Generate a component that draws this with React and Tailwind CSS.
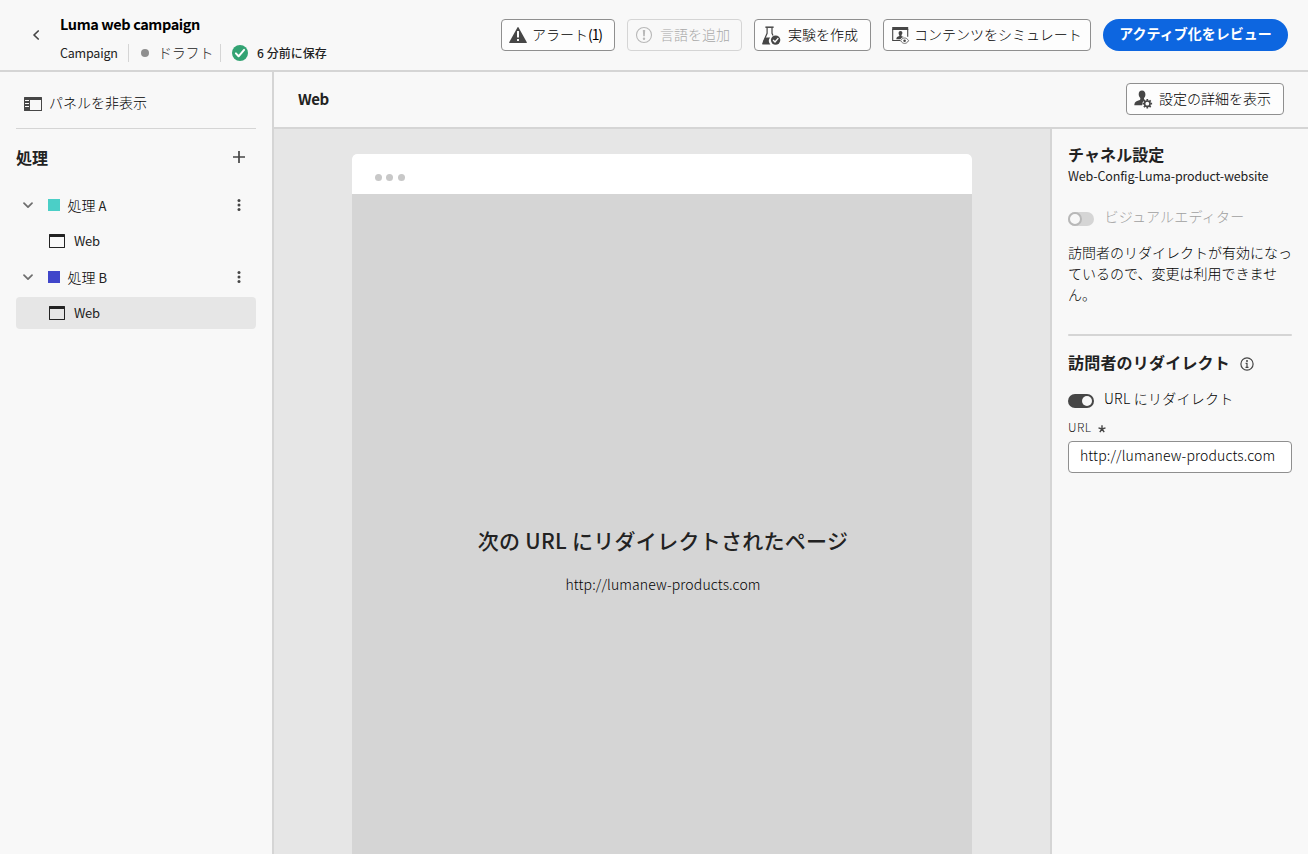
import React from "react";

function ActionButton({ icon, children, className = "" }) {
  return (
    <button
      className={`flex h-8 shrink-0 items-center rounded border bg-[#fdfdfd] text-sm leading-[21px] font-light whitespace-nowrap ${className}`}
    >
      {icon}
      <span className="pb-0.5">{children}</span>
    </button>
  );
}

const AlertIcon = () => (
  <svg className="h-[18px] w-[18px] shrink-0" viewBox="0 0 18 18">
    <path
      fill="#464646"
      fillRule="evenodd"
      d="M8.56 1.29.2 16.2A.54.54 0 0 0 .7 17h16.6a.54.54 0 0 0 .5-.8L9.44 1.29a.5.5 0 0 0-.88 0ZM10 14.6a.3.3 0 0 1-.3.3H8.3a.3.3 0 0 1-.3-.3v-1.4a.3.3 0 0 1 .3-.3h1.4a.3.3 0 0 1 .3.3Zm0-3.3a.3.3 0 0 1-.3.3H8.3a.3.3 0 0 1-.3-.3v-6a.3.3 0 0 1 .3-.3h1.4a.3.3 0 0 1 .3.3Z"
    />
  </svg>
);

const NoticeIcon = () => (
  <svg className="h-[18px] w-[18px] shrink-0" viewBox="0 0 18 18" fill="none">
    <circle cx="9" cy="9" r="7.5" stroke="#b8b8b8" strokeWidth="1.1" />
    <path d="M7.8 4h2.4l-.4 6.3H8.2Z" fill="#b8b8b8" />
    <circle cx="9" cy="12.7" r="1.2" fill="#b8b8b8" />
  </svg>
);

const FlaskIcon = () => (
  <svg className="h-[19px] w-[19px] shrink-0" viewBox="0 0 19 19" fill="none">
    <path d="M3.4 1.2h8.2" stroke="#464646" strokeWidth="1.5" />
    <path d="M5.1 2v5.3L1.3 16M10 2v5.3l1 2.2" stroke="#464646" strokeWidth="1.2" />
    <path d="M3.2 11.6h4.9a5.4 5.4 0 0 0 .3 7H1.2c-.9 0-1.2-.8-.9-1.5Z" fill="#464646" />
    <circle cx="13.6" cy="14.1" r="4.7" fill="#464646" />
    <path d="m11.1 14.1 1.9 1.9 3.3-3.9" stroke="#fdfdfd" strokeWidth="1.4" />
  </svg>
);

const SimulateIcon = () => (
  <svg className="h-[18px] w-[18px] shrink-0" viewBox="0 0 18 18" fill="none">
    <path d="M.2 1h16v3H.2Z" fill="#464646" />
    <path d="M.7 3v11.500h7.600M15.700 3v7.800" stroke="#464646" strokeWidth="1.100" />
    <path
      d="M8.500 5c1.300 0 1.900.9 1.900 2.100 0 .8-.4 1.500-.9 2v.8c0 .3 1.300.5 2.400 1.100-1.500.4-2.700 1.100-3.500 2.300H4.300c0-2 1.200-2.700 3-3.300v-.8c-.5-.5-.7-1.200-.7-2C6.600 5.900 7.200 5 8.500 5Z"
      fill="#464646"
    />
    <path
      d="M8.600 14.700c1.200-1.900 2.500-2.700 4-2.700s2.800.8 4 2.700c-1.200 1.900-2.500 2.700-4 2.700s-2.800-.8-4-2.700Z"
      fill="#fdfdfd"
      stroke="#6a6a6a"
      strokeWidth="1"
    />
    <circle cx="12.600" cy="14.700" r="1.300" fill="#464646" />
  </svg>
);

const UserGearIcon = () => (
  <svg className="h-[19px] w-[19px] shrink-0" viewBox="0 0 19 19" fill="none">
    <path
      d="M8 .4c2.300 0 3.500 1.700 3.400 4 0 1.700-.7 2.900-1.400 3.700v1c0 .5.300.8 1 .9-1.900 1-3 2.800-2.900 5.300H.7c-.3 0-.5-.2-.4-.6.3-2.900 2.500-3.600 5.500-4.600.4-.2.500-.5.500-1V8c-.8-.8-1.600-2-1.600-3.700C4.700 2 5.800.400 8 .400Z"
      fill="#464646"
    />
    <circle cx="13.300" cy="13.700" r="2.700" stroke="#464646" strokeWidth="1.600" />
    <path
      d="M13.300 8.900v1.800M13.300 16.700v1.800M8.500 13.700h1.800M16.300 13.700h1.800M9.900 10.300l1.300 1.300M15.400 15.800l1.300 1.300M16.700 10.300l-1.300 1.300M11.200 15.800l-1.300 1.300"
      stroke="#464646"
      strokeWidth="1.700"
    />
  </svg>
);

const PanelIcon = () => (
  <svg className="h-[14px] w-[18px] shrink-0" viewBox="0 0 18 14">
    <path fill="#464646" fillRule="evenodd" d="M.5 0h17a.5.5 0 0 1 .5.500v13a.5.5 0 0 1-.5.500H.5a.5.5 0 0 1-.5-.5V.5A.5.5 0 0 1 .5 0ZM6 3v10h11V3Z" />
    <path d="M1 3.500h4M1 6.500h4M1 9.500h4" stroke="#f8f8f8" strokeWidth="1" />
  </svg>
);

const WindowIcon = () => (
  <svg className="h-[14px] w-4 shrink-0" viewBox="0 0 16 14">
    <path fill="#222222" fillRule="evenodd" d="M.4 0h15.200a.4.4 0 0 1 .4.400v13.200a.4.400 0 0 1-.4.400H.4a.4.400 0 0 1-.4-.4V.4A.4.400 0 0 1 .4 0ZM1 3v10h14V3Z" />
  </svg>
);

const MoreIcon = () => (
  <svg className="h-3 w-1 shrink-0" viewBox="0 0 4 12" fill="#464646">
    <circle cx="2" cy="1.500" r="1.500" />
    <circle cx="2" cy="6" r="1.500" />
    <circle cx="2" cy="10.500" r="1.500" />
  </svg>
);

function Treatment({ label, swatch, selected }) {
  return (
    <div>
      <div className="flex h-10 items-center pr-[15px] pl-[7px]">
        <svg className="h-[7px] w-[10px] shrink-0" viewBox="0 0 10 7" fill="none">
          <path d="m1 1.200 4 4 4-4" stroke="#6e6e6e" strokeWidth="1.700" strokeLinecap="round" strokeLinejoin="round" />
        </svg>
        <span className={`ml-[15px] h-3 w-3 ${swatch}`} />
        <span className="ml-[7.5px] flex-1 font-light text-black">
          処理 <span className="text-[13px] font-normal text-[#222222]">{label}</span>
        </span>
        <MoreIcon />
      </div>
      <div className={`flex h-8 items-center rounded pl-[33px] ${selected ? "bg-[#e6e6e6]" : ""}`}>
        <WindowIcon />
        <span className="ml-[9px] pb-px text-[13px] tracking-[-0.3px]">Web</span>
      </div>
    </div>
  );
}

export default function App() {
  return (
    <div className="flex h-[854px] w-[1308px] flex-col overflow-hidden bg-[#f8f8f8] font-['Noto_Sans_CJK_JP',sans-serif] text-sm leading-[21px] text-[#222222]">
      <header className="flex h-[72px] shrink-0 border-b-2 border-[#d5d5d5] pr-5 pl-8">
        <svg className="mt-[30px] h-[10px] w-2 shrink-0" viewBox="0 0 8 10" fill="none">
          <path d="M6.200 1 2 5l4.200 4" stroke="#464646" strokeWidth="1.700" strokeLinecap="round" strokeLinejoin="round" />
        </svg>
        <div className="ml-5 flex-1 pt-3">
          <h1 className="h-6 text-[14.5px] leading-6 font-bold tracking-[-0.4px] text-black">Luma web campaign</h1>
          <div className="mt-2 flex h-[18px] items-center text-[13px] whitespace-nowrap">
            <span className="w-[58px] pb-0.5 text-[12.5px] tracking-[-0.2px]">Campaign</span>
            <span className="ml-[10px] h-[18px] w-px bg-[#d5d5d5]" />
            <span className="ml-3 h-2 w-2 rounded-full bg-[#8f8f8f]" />
            <span className="ml-[9px] w-[55px] pb-0.5 text-sm font-light tracking-[-0.2px] text-[#222222]">ドラフト</span>
            <span className="ml-[7px] h-[18px] w-px bg-[#d5d5d5]" />
            <svg className="ml-[11px] h-4 w-4" viewBox="0 0 16 16" fill="none">
              <circle cx="8" cy="8" r="8" fill="#33a373" />
              <path d="m3.900 8.400 2.700 2.900 5.500-6.400" stroke="#fff" strokeWidth="2" strokeLinecap="round" strokeLinejoin="round" />
            </svg>
            <span className="ml-[9px] pb-0.5 text-[12px] font-medium tracking-[0.05px]">6 分前に保存</span>
          </div>
        </div>
        <div className="flex items-start gap-3 pt-[19px]">
          <ActionButton icon={<AlertIcon />} className="w-[114px] gap-[5px] border-[#8f8f8f] pl-[7px] text-black">
            アラート<span className="font-normal tracking-[-1.1px]">(1)</span>
          </ActionButton>
          <button className="flex h-8 w-[115px] shrink-0 items-center gap-[7px] rounded border border-[#d5d5d5] pl-[7px] font-light whitespace-nowrap text-[#a8a8a8]">
            <NoticeIcon />
            <span className="pb-0.5">言語を追加</span>
          </button>
          <ActionButton icon={<FlaskIcon />} className="w-[117px] gap-[7px] border-[#8f8f8f] pl-[7px] text-black">
            実験を作成
          </ActionButton>
          <ActionButton icon={<SimulateIcon />} className="w-[208px] gap-1 border-[#8f8f8f] pl-2 text-black">
            コンテンツをシミュレート
          </ActionButton>
          <button className="h-8 w-[185px] rounded-full bg-[#0d66e0] pb-1 text-sm font-bold whitespace-nowrap text-white">
            アクティブ化をレビュー
          </button>
        </div>
      </header>

      <div className="flex min-h-0 flex-1">
        <aside className="w-[274px] shrink-0 border-r-2 border-[#d5d5d5] px-4">
          <div className="flex h-[57px] items-center gap-[7px] border-b border-[#d5d5d5] pt-2 pl-2">
            <PanelIcon />
            <span className="pb-[3px] font-light text-black">パネルを非表示</span>
          </div>
          <div className="flex h-14 items-center justify-between pr-[11px]">
            <h2 className="text-base font-bold">処理</h2>
            <svg className="h-3 w-3" viewBox="0 0 12 12">
              <path d="M6 0v12M0 6h12" stroke="#464646" strokeWidth="1.700" />
            </svg>
          </div>
          <Treatment label="A" swatch="bg-[#4bcfc7]" />
          <Treatment label="B" swatch="bg-[#4046ca]" selected />
        </aside>

        <div className="flex min-w-0 flex-1 flex-col">
          <div className="flex h-[57px] shrink-0 items-center justify-between border-b-2 border-[#d5d5d5] pr-6 pl-6">
            <h2 className="pb-0.5 text-[15px] font-bold tracking-[-0.5px]">Web</h2>
            <ActionButton icon={<UserGearIcon />} className="mb-px w-[158px] gap-[6px] border-[#8f8f8f] pl-[7px] text-black">
              設定の詳細を表示
            </ActionButton>
          </div>
          <div className="flex min-h-0 flex-1">
            <main className="flex flex-1 justify-center bg-[#e6e6e6] pt-[25px]">
              <div className="flex w-[620px] flex-col overflow-hidden rounded-t-[5px] bg-[#d5d5d5]">
                <div className="flex h-10 shrink-0 items-center gap-[4.700px] bg-white pt-[6px] pl-[22.500px]">
                  <span className="h-[7px] w-[7px] rounded-full bg-[#c8c8c8]" />
                  <span className="h-[7px] w-[7px] rounded-full bg-[#c8c8c8]" />
                  <span className="h-[7px] w-[7px] rounded-full bg-[#c8c8c8]" />
                </div>
                <div className="flex flex-col items-center pt-[330px] pl-[2px] whitespace-nowrap">
                  <h3 className="text-[21px] leading-8 font-medium tracking-[0.28px]">次の URL にリダイレクトされたページ</h3>
                  <p className="mt-[18px] font-light tracking-[0.13px] text-black">http://lumanew-products.com</p>
                </div>
              </div>
            </main>

            <aside className="w-[258px] shrink-0 border-l-2 border-[#d5d5d5] px-4 pt-[15px]">
              <h2 className="text-base leading-[21px] font-bold tracking-[0.1px]">チャネル設定</h2>
              <p className="text-[12.5px] leading-[21px] tracking-[-0.15px] whitespace-nowrap">Web-Config-Luma-product-website</p>
              <div className="mt-[22px] flex h-[21px] items-center">
                <span className="flex h-[14px] w-[26px] rounded-full bg-[#d5d5d5]">
                  <span className="h-[14px] w-[14px] rounded-full border-2 border-[#b8b8b8] bg-[#f8f8f8]" />
                </span>
                <span className="mb-1 ml-[10.5px] font-light tracking-[0.25px] text-[#a0a0a0]">ビジュアルエディター</span>
              </div>
              <p className="mt-[13px] w-[226px] font-light text-black">訪問者のリダイレクトが有効になっているので、変更は利用できません。</p>
              <div className="mt-[29px] h-0.5 rounded-full bg-[#d5d5d5]" />
              <div className="mt-[15px] flex h-6 items-center">
                <h2 className="pb-0.5 text-base font-bold tracking-[0.2px]">訪問者のリダイレクト</h2>
                <svg className="mt-px ml-[10px] h-[14px] w-[14px]" viewBox="0 0 14 14" fill="none">
                  <circle cx="7" cy="7" r="6.100" stroke="#464646" strokeWidth="1.200" />
                  <circle cx="7" cy="4" r="1" fill="#464646" />
                  <path d="M5.600 6.400H7v4M5.500 10.300h3" stroke="#464646" strokeWidth="1.200" />
                </svg>
              </div>
              <div className="mt-[14px] flex h-[21px] items-center">
                <span className="mt-0.5 flex h-[14px] w-[26px] justify-end rounded-full bg-[#464646] p-0.5">
                  <span className="h-[10px] w-[10px] rounded-full bg-[#f8f8f8]" />
                </span>
                <span className="ml-[10px] pb-0.5 font-light tracking-[0.25px] text-black">URL にリダイレクト</span>
              </div>
              <div className="mt-[7px] flex h-5 items-center text-xs font-light tracking-[0.5px] text-[#222222]">
                URL
                <svg className="mt-[3px] ml-[6px] h-2 w-2" viewBox="0 0 8 8">
                  <path d="M4 4V.3M4 4 .5 2.900M4 4l3.500-1.100M4 4 1.800 7.200M4 4l2.200 3.200" stroke="#464646" strokeWidth="1.400" />
                </svg>
              </div>
              <div className="mt-1 flex h-8 items-center rounded border border-[#8f8f8f] bg-white pb-[3px] pl-[11px] font-light tracking-[0.13px] text-black">
                http://lumanew-products.com
              </div>
            </aside>
          </div>
        </div>
      </div>
    </div>
  );
}
